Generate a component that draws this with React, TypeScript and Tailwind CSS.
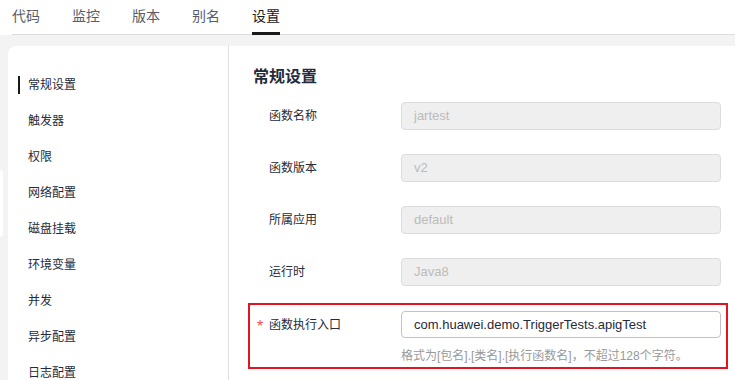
import React from "react";

const tabs = ["代码", "监控", "版本", "别名", "设置"];
const menu = ["常规设置", "触发器", "权限", "网络配置", "磁盘挂载", "环境变量", "并发", "异步配置", "日志配置"];
const fields = [
  { label: "函数名称", value: "jartest" },
  { label: "函数版本", value: "v2" },
  { label: "所属应用", value: "default" },
  { label: "运行时", value: "Java8" },
];

const App = () => {
  return (
    <div
      className="relative w-[735px] h-[380px] overflow-hidden bg-[#f3f3f3] text-[#252b3a]"
      style={{ fontFamily: '"Liberation Sans", "Noto Sans CJK SC", sans-serif' }}
    >
      {/* Tabs */}
      <div className="bg-white h-[35px]">
        <div className="ml-3 h-[35px] flex gap-8 border-b border-[#dcdcdc]">
          {tabs.map((t) => (
            <div
              key={t}
              className={`h-[35px] flex items-start pt-[6px] text-[14px] leading-[20px] border-b-[3px] -mb-px ${
                t === "设置" ? "border-[#191919] text-[#191919]" : "border-transparent text-[#575d6c]"
              }`}
            >
              {t}
            </div>
          ))}
        </div>
      </div>

      {/* collapse handle */}
      <div className="absolute left-0 top-[170px] w-[3px] h-[67px] bg-white rounded-r" />

      <div className="flex pt-[11px] pl-2 h-[345px]">
        {/* Left menu */}
        <div className="w-[221px] bg-white rounded-tl-lg border-r border-[#dfdfdf] pt-[21px]">
          {menu.map((m, i) => (
            <div key={m} className="relative h-9 flex items-center pl-5 text-[12px]">
              {i === 0 && <span className="absolute left-[10px] top-[9px] w-[2px] h-[18px] bg-[#191919]" />}
              {m}
            </div>
          ))}
        </div>

        {/* Right content */}
        <div className="flex-1 bg-white pl-[19px] pr-[7px] pt-[20px]">
          <div className="pl-[5px] h-[22px] leading-[22px] text-[16px] font-bold">常规设置</div>
          <div className="mt-[14px] flex flex-col gap-6 pl-[21px] pr-[7px]">
            {fields.map((f) => (
              <div key={f.label} className="flex items-center h-7">
                <div className="w-[132px] text-[12px]">{f.label}</div>
                <div className="flex-1 h-7 rounded bg-[#efefef] border border-[#dcdcdc] pl-3 flex items-center text-[13px] text-[#bbbbbb]">
                  {f.value}
                </div>
              </div>
            ))}
          </div>

          <div className="mt-[17px] border-2 border-[#e3141f] pl-[7px] pr-[5px] pt-[6px] pb-[3px]">
            <div className="flex items-center h-[27px]">
              <span className="w-3 text-[#f0504a] text-[16px] leading-[16px] pt-[4px]">*</span>
              <div className="w-[132px] text-[12px]">函数执行入口</div>
              <div className="flex-1 h-[27px] rounded bg-white border border-[#c2c2c2] pl-3 flex items-center text-[13px] text-[#252b3a]">
                com.huawei.demo.TriggerTests.apigTest
              </div>
            </div>
            <div className="pl-[144px] mt-[10px] text-[12px] leading-4 text-[#999999]">
              格式为[包名].[类名].[执行函数名]，不超过128个字符。
            </div>
          </div>
        </div>
      </div>
    </div>
  );
};

export default App;
